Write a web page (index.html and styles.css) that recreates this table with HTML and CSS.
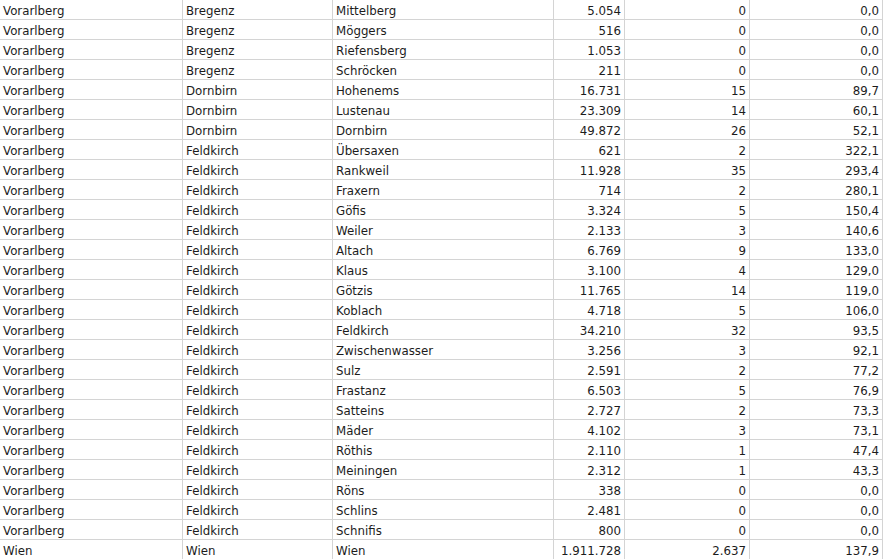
FILE: index.html
```html
<!DOCTYPE html>
<html lang="de">
<head>
<meta charset="utf-8">
<title>Tabelle</title>
<link rel="stylesheet" href="styles.css">
</head>
<body>
<div class="sheet">
<div class="row"><div class="c t">Vorarlberg</div><div class="c t">Bregenz</div><div class="c t">Mittelberg</div><div class="c n">5.054</div><div class="c n">0</div><div class="c n">0,0</div></div>
<div class="row"><div class="c t">Vorarlberg</div><div class="c t">Bregenz</div><div class="c t">Möggers</div><div class="c n">516</div><div class="c n">0</div><div class="c n">0,0</div></div>
<div class="row"><div class="c t">Vorarlberg</div><div class="c t">Bregenz</div><div class="c t">Riefensberg</div><div class="c n">1.053</div><div class="c n">0</div><div class="c n">0,0</div></div>
<div class="row"><div class="c t">Vorarlberg</div><div class="c t">Bregenz</div><div class="c t">Schröcken</div><div class="c n">211</div><div class="c n">0</div><div class="c n">0,0</div></div>
<div class="row"><div class="c t">Vorarlberg</div><div class="c t">Dornbirn</div><div class="c t">Hohenems</div><div class="c n">16.731</div><div class="c n">15</div><div class="c n">89,7</div></div>
<div class="row"><div class="c t">Vorarlberg</div><div class="c t">Dornbirn</div><div class="c t">Lustenau</div><div class="c n">23.309</div><div class="c n">14</div><div class="c n">60,1</div></div>
<div class="row"><div class="c t">Vorarlberg</div><div class="c t">Dornbirn</div><div class="c t">Dornbirn</div><div class="c n">49.872</div><div class="c n">26</div><div class="c n">52,1</div></div>
<div class="row"><div class="c t">Vorarlberg</div><div class="c t">Feldkirch</div><div class="c t">Übersaxen</div><div class="c n">621</div><div class="c n">2</div><div class="c n">322,1</div></div>
<div class="row"><div class="c t">Vorarlberg</div><div class="c t">Feldkirch</div><div class="c t">Rankweil</div><div class="c n">11.928</div><div class="c n">35</div><div class="c n">293,4</div></div>
<div class="row"><div class="c t">Vorarlberg</div><div class="c t">Feldkirch</div><div class="c t">Fraxern</div><div class="c n">714</div><div class="c n">2</div><div class="c n">280,1</div></div>
<div class="row"><div class="c t">Vorarlberg</div><div class="c t">Feldkirch</div><div class="c t">Göfis</div><div class="c n">3.324</div><div class="c n">5</div><div class="c n">150,4</div></div>
<div class="row"><div class="c t">Vorarlberg</div><div class="c t">Feldkirch</div><div class="c t">Weiler</div><div class="c n">2.133</div><div class="c n">3</div><div class="c n">140,6</div></div>
<div class="row"><div class="c t">Vorarlberg</div><div class="c t">Feldkirch</div><div class="c t">Altach</div><div class="c n">6.769</div><div class="c n">9</div><div class="c n">133,0</div></div>
<div class="row"><div class="c t">Vorarlberg</div><div class="c t">Feldkirch</div><div class="c t">Klaus</div><div class="c n">3.100</div><div class="c n">4</div><div class="c n">129,0</div></div>
<div class="row"><div class="c t">Vorarlberg</div><div class="c t">Feldkirch</div><div class="c t">Götzis</div><div class="c n">11.765</div><div class="c n">14</div><div class="c n">119,0</div></div>
<div class="row"><div class="c t">Vorarlberg</div><div class="c t">Feldkirch</div><div class="c t">Koblach</div><div class="c n">4.718</div><div class="c n">5</div><div class="c n">106,0</div></div>
<div class="row"><div class="c t">Vorarlberg</div><div class="c t">Feldkirch</div><div class="c t">Feldkirch</div><div class="c n">34.210</div><div class="c n">32</div><div class="c n">93,5</div></div>
<div class="row"><div class="c t">Vorarlberg</div><div class="c t">Feldkirch</div><div class="c t">Zwischenwasser</div><div class="c n">3.256</div><div class="c n">3</div><div class="c n">92,1</div></div>
<div class="row"><div class="c t">Vorarlberg</div><div class="c t">Feldkirch</div><div class="c t">Sulz</div><div class="c n">2.591</div><div class="c n">2</div><div class="c n">77,2</div></div>
<div class="row"><div class="c t">Vorarlberg</div><div class="c t">Feldkirch</div><div class="c t">Frastanz</div><div class="c n">6.503</div><div class="c n">5</div><div class="c n">76,9</div></div>
<div class="row"><div class="c t">Vorarlberg</div><div class="c t">Feldkirch</div><div class="c t">Satteins</div><div class="c n">2.727</div><div class="c n">2</div><div class="c n">73,3</div></div>
<div class="row"><div class="c t">Vorarlberg</div><div class="c t">Feldkirch</div><div class="c t">Mäder</div><div class="c n">4.102</div><div class="c n">3</div><div class="c n">73,1</div></div>
<div class="row"><div class="c t">Vorarlberg</div><div class="c t">Feldkirch</div><div class="c t">Röthis</div><div class="c n">2.110</div><div class="c n">1</div><div class="c n">47,4</div></div>
<div class="row"><div class="c t">Vorarlberg</div><div class="c t">Feldkirch</div><div class="c t">Meiningen</div><div class="c n">2.312</div><div class="c n">1</div><div class="c n">43,3</div></div>
<div class="row"><div class="c t">Vorarlberg</div><div class="c t">Feldkirch</div><div class="c t">Röns</div><div class="c n">338</div><div class="c n">0</div><div class="c n">0,0</div></div>
<div class="row"><div class="c t">Vorarlberg</div><div class="c t">Feldkirch</div><div class="c t">Schlins</div><div class="c n">2.481</div><div class="c n">0</div><div class="c n">0,0</div></div>
<div class="row"><div class="c t">Vorarlberg</div><div class="c t">Feldkirch</div><div class="c t">Schnifis</div><div class="c n">800</div><div class="c n">0</div><div class="c n">0,0</div></div>
<div class="row"><div class="c t">Wien</div><div class="c t">Wien</div><div class="c t">Wien</div><div class="c n">1.911.728</div><div class="c n">2.637</div><div class="c n">137,9</div></div>
</div>
</body>
</html>
```

FILE: styles.css
```css
html, body {
  margin: 0;
  padding: 0;
  background: #ffffff;
}
body {
  font-family: "DejaVu Sans", Verdana, sans-serif;
  font-size: 11.8px;
  color: #1c1c1c;
  overflow: hidden;
}
.sheet {
  display: flex;
  flex-direction: column;
  width: 883px;
}
.row {
  display: grid;
  grid-template-columns: 183px 150px 221px 71px 125px 133px;
  height: 20px;
}
.c {
  box-sizing: border-box;
  border-right: 1px solid #d4d4d4;
  border-bottom: 1px solid #d4d4d4;
  padding-top: 3px;
  line-height: 16px;
  white-space: nowrap;
  overflow: hidden;
}
.t {
  padding-left: 3px;
  text-align: left;
}
.n {
  padding-right: 3px;
  text-align: right;
}
```
